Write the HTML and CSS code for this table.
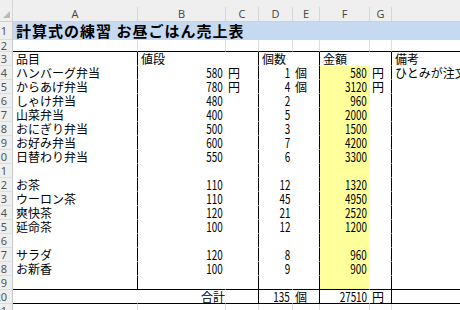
FILE: index.html
```html
<!DOCTYPE html>
<html lang="ja">
<head>
<meta charset="utf-8">
<title>お昼ごはん売上表</title>
<link rel="stylesheet" href="styles.css">
</head>
<body>
<div class="sheet">
  <div class="colhead">
    <div class="corner"><span class="tri"></span></div>
    <div class="ch">A</div><div class="ch">B</div><div class="ch">C</div><div class="ch">D</div>
    <div class="ch">E</div><div class="ch">F</div><div class="ch">G</div><div class="ch"></div>
  </div>

  <div class="r r1"><div class="rh">1</div><div class="title">計算式の練習 お昼ごはん売上表</div></div>

  <div class="r r2"><div class="rh">2</div>
    <div class="c bb"></div><div class="c bb"></div><div class="c bb"></div><div class="c bb"></div>
    <div class="c bb"></div><div class="c bb"></div><div class="c bb"></div><div class="c bb"></div>
  </div>

  <div class="r"><div class="rh">3</div>
    <div class="c t bl"><span class="u">品目</span></div><div class="c t"><span class="u">値段</span></div><div class="c t bl"></div>
    <div class="c t"><span class="u">個数</span></div><div class="c t bl"></div>
    <div class="c t"><span class="u">金額</span></div><div class="c t bl"></div>
    <div class="c t"><span class="u">備考</span></div>
  </div>

  <div class="r"><div class="rh">4</div>
    <div class="c t bl">ハンバーグ弁当</div><div class="c t n"><span class="d">580</span></div><div class="c t bl unit">円</div>
    <div class="c t n"><span class="d">1</span></div><div class="c t bl unit">個</div>
    <div class="c t y n"><span class="d">580</span></div><div class="c t bl unit">円</div>
    <div class="c t">ひとみが注文</div>
  </div>

  <div class="r"><div class="rh">5</div>
    <div class="c t bl">からあげ弁当</div><div class="c t n"><span class="d">780</span></div><div class="c t bl unit">円</div>
    <div class="c t n"><span class="d">4</span></div><div class="c t bl unit">個</div>
    <div class="c t y n"><span class="d">3120</span></div><div class="c t bl unit">円</div>
    <div class="c t"></div>
  </div>

  <div class="r"><div class="rh">6</div>
    <div class="c t bl">しゃけ弁当</div><div class="c t n"><span class="d">480</span></div><div class="c t bl"></div>
    <div class="c t n"><span class="d">2</span></div><div class="c t bl"></div>
    <div class="c t y n"><span class="d">960</span></div><div class="c t bl"></div>
    <div class="c t"></div>
  </div>

  <div class="r"><div class="rh">7</div>
    <div class="c t bl">山菜弁当</div><div class="c t n"><span class="d">400</span></div><div class="c t bl"></div>
    <div class="c t n"><span class="d">5</span></div><div class="c t bl"></div>
    <div class="c t y n"><span class="d">2000</span></div><div class="c t bl"></div>
    <div class="c t"></div>
  </div>

  <div class="r"><div class="rh">8</div>
    <div class="c t bl">おにぎり弁当</div><div class="c t n"><span class="d">500</span></div><div class="c t bl"></div>
    <div class="c t n"><span class="d">3</span></div><div class="c t bl"></div>
    <div class="c t y n"><span class="d">1500</span></div><div class="c t bl"></div>
    <div class="c t"></div>
  </div>

  <div class="r"><div class="rh">9</div>
    <div class="c t bl">お好み弁当</div><div class="c t n"><span class="d">600</span></div><div class="c t bl"></div>
    <div class="c t n"><span class="d">7</span></div><div class="c t bl"></div>
    <div class="c t y n"><span class="d">4200</span></div><div class="c t bl"></div>
    <div class="c t"></div>
  </div>

  <div class="r"><div class="rh">10</div>
    <div class="c t bl">日替わり弁当</div><div class="c t n"><span class="d">550</span></div><div class="c t bl"></div>
    <div class="c t n"><span class="d">6</span></div><div class="c t bl"></div>
    <div class="c t y n"><span class="d">3300</span></div><div class="c t bl"></div>
    <div class="c t"></div>
  </div>

  <div class="r"><div class="rh">11</div>
    <div class="c t bl"></div><div class="c t"></div><div class="c t bl"></div>
    <div class="c t"></div><div class="c t bl"></div>
    <div class="c t y"></div><div class="c t bl"></div>
    <div class="c t"></div>
  </div>

  <div class="r"><div class="rh">12</div>
    <div class="c t bl">お茶</div><div class="c t n"><span class="d">110</span></div><div class="c t bl"></div>
    <div class="c t n"><span class="d">12</span></div><div class="c t bl"></div>
    <div class="c t y n"><span class="d">1320</span></div><div class="c t bl"></div>
    <div class="c t"></div>
  </div>

  <div class="r"><div class="rh">13</div>
    <div class="c t bl">ウーロン茶</div><div class="c t n"><span class="d">110</span></div><div class="c t bl"></div>
    <div class="c t n"><span class="d">45</span></div><div class="c t bl"></div>
    <div class="c t y n"><span class="d">4950</span></div><div class="c t bl"></div>
    <div class="c t"></div>
  </div>

  <div class="r"><div class="rh">14</div>
    <div class="c t bl">爽快茶</div><div class="c t n"><span class="d">120</span></div><div class="c t bl"></div>
    <div class="c t n"><span class="d">21</span></div><div class="c t bl"></div>
    <div class="c t y n"><span class="d">2520</span></div><div class="c t bl"></div>
    <div class="c t"></div>
  </div>

  <div class="r"><div class="rh">15</div>
    <div class="c t bl">延命茶</div><div class="c t n"><span class="d">100</span></div><div class="c t bl"></div>
    <div class="c t n"><span class="d">12</span></div><div class="c t bl"></div>
    <div class="c t y n"><span class="d">1200</span></div><div class="c t bl"></div>
    <div class="c t"></div>
  </div>

  <div class="r"><div class="rh">16</div>
    <div class="c t bl"></div><div class="c t"></div><div class="c t bl"></div>
    <div class="c t"></div><div class="c t bl"></div>
    <div class="c t y"></div><div class="c t bl"></div>
    <div class="c t"></div>
  </div>

  <div class="r"><div class="rh">17</div>
    <div class="c t bl">サラダ</div><div class="c t n"><span class="d">120</span></div><div class="c t bl"></div>
    <div class="c t n"><span class="d">8</span></div><div class="c t bl"></div>
    <div class="c t y n"><span class="d">960</span></div><div class="c t bl"></div>
    <div class="c t"></div>
  </div>

  <div class="r"><div class="rh">18</div>
    <div class="c t bl">お新香</div><div class="c t n"><span class="d">100</span></div><div class="c t bl"></div>
    <div class="c t n"><span class="d">9</span></div><div class="c t bl"></div>
    <div class="c t y n"><span class="d">900</span></div><div class="c t bl"></div>
    <div class="c t"></div>
  </div>

  <div class="r"><div class="rh">19</div>
    <div class="c t bl bb"></div><div class="c t bb"></div><div class="c t bl bb"></div>
    <div class="c t bb"></div><div class="c t bl bb"></div>
    <div class="c t y bb"></div><div class="c t bl bb"></div>
    <div class="c t bb"></div>
  </div>

  <div class="r"><div class="rh">20</div>
    <div class="c t bb"></div><div class="c t bb n tot"><span class="u">合計</span></div><div class="c t bl bb"></div>
    <div class="c t bb n"><span class="d u">135</span></div><div class="c t bl bb unit"><span class="u">個</span></div>
    <div class="c t bb n"><span class="d u">27510</span></div><div class="c t bl bb unit"><span class="u">円</span></div>
    <div class="c t bb"></div>
  </div>

  <div class="r"><div class="rh">21</div>
    <div class="c"></div><div class="c"></div><div class="c"></div><div class="c"></div>
    <div class="c"></div><div class="c"></div><div class="c"></div><div class="c"></div>
  </div>
</div>
</body>
</html>
```

FILE: styles.css
```css
* { box-sizing: border-box; }

html, body {
  margin: 0;
  padding: 0;
  overflow: hidden;
  background: #ffffff;
}

.sheet {
  width: 592px;
  font-family: "Noto Sans CJK JP", "Noto Sans", sans-serif;
  font-size: 12px;
  color: #000;
}

.colhead,
.r {
  display: grid;
  grid-template-columns: 13px 125px 88px 33px 34px 27px 50px 22px 200px;
}

.colhead {
  height: 22px;
  background: #efefef;
  border-bottom: 1px solid #d2d2d2;
  align-items: end;
}

.corner {
  height: 21px;
  border-right: 1px solid #d6d6d6;
  display: flex;
  align-items: flex-end;
  justify-content: flex-end;
  padding: 0 2px 3px 0;
}

.tri {
  width: 0;
  height: 0;
  border-left: 7px solid transparent;
  border-bottom: 7px solid #b9b9b9;
}

.ch {
  height: 14px;
  border-right: 1px solid #d6d6d6;
  padding-top: 1px;
  text-align: center;
  font-family: "Open Sans", "Noto Sans", sans-serif;
  font-size: 11px;
  line-height: 12px;
  color: #444;
}

.r {
  height: 14px;
}

.r1 { height: 18px; }
.r2 { height: 12px; }

.rh {
  background: #efefef;
  border-right: 1px solid #c9c9c9;
  border-bottom: 1px solid #dcdcdc;
  direction: rtl;
  overflow: hidden;
  white-space: nowrap;
  padding-right: 5px;
  font-family: "Noto Sans", sans-serif;
  font-size: 11px;
  line-height: 13px;
  color: #555;
}

.r1 .rh { line-height: 18px; }
.r2 .rh { line-height: 11px; }

.title {
  grid-column: 2 / -1;
  background: #c5d9f0;
  padding-left: 3px;
  font-weight: 700;
  font-size: 15px;
  letter-spacing: 1px;
  line-height: 18px;
  white-space: nowrap;
}

.c {
  border-right: 1px solid #dedede;
  border-bottom: 1px solid #dedede;
  padding-left: 3px;
  line-height: 14px;
  white-space: nowrap;
  overflow: hidden;
}

.c.t {
  border-right-color: transparent;
  border-bottom-color: transparent;
  background: #fff;
}

.c.t.bl { border-right-color: #000; }
.c.bb { border-bottom-color: #000; }
.c.t.bb { border-bottom-color: #000; }

.c.y { background: #ffff9c; }

.c.n {
  text-align: right;
  padding-left: 0;
  padding-right: 2px;
}

.c.tot { padding-right: 0; }

.c.unit { padding-left: 2px; }

.d {
  display: inline-block;
  font-size: 13px;
  transform: scaleX(0.76);
  transform-origin: right center;
}

.u {
  text-decoration: underline;
  text-underline-offset: 1px;
}
```
